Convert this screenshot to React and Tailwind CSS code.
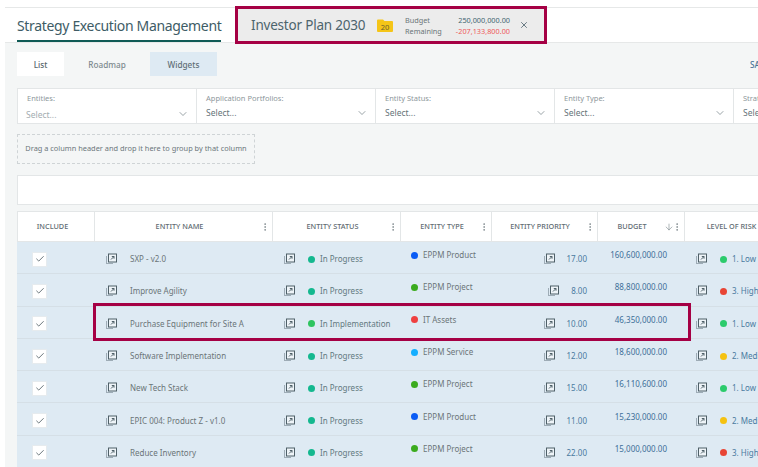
import { ChevronDown, X, ArrowDown, Check, EllipsisVertical } from "lucide-react";

const filters = [
  { label: "Entities:", faded: true },
  { label: "Application Portfolios:" },
  { label: "Entity Status:" },
  { label: "Entity Type:" },
  { label: "Strategic Theme:" },
];

const columns = [
  { label: "Include", width: "w-[77px] pr-[7px]" },
  { label: "Entity Name", width: "w-[178px] pr-[8px]", menu: true },
  { label: "Entity Status", width: "w-[128px] pr-[8px]", menu: true },
  { label: "Entity Type", width: "w-[91px] pr-[8px]", menu: true },
  { label: "Entity Priority", width: "w-[106px] pr-[9px]", menu: true },
  { label: "Budget", width: "w-[87px] pr-[18px]", menu: true, sort: true },
  { label: "Level of Risk", width: "w-[120px] pr-[26px]" },
];

const rows = [
  { name: "SXP - v2.0", status: "In Progress", statusDot: "bg-[#14b88f]", type: "EPPM Product", typeDot: "bg-[#0a5cf5]", priority: "17.00", budget: "160,600,000.00", risk: "1. Low", riskDot: "bg-[#2ccb6c]" },
  { name: "Improve Agility", status: "In Progress", statusDot: "bg-[#14b88f]", type: "EPPM Project", typeDot: "bg-[#3bab1e]", priority: "8.00", budget: "88,800,000.00", risk: "3. High", riskDot: "bg-[#e84535]" },
  { name: "Purchase Equipment for Site A", status: "In Implementation", statusDot: "bg-[#2ec45f]", type: "IT Assets", typeDot: "bg-[#ef4040]", priority: "10.00", budget: "46,350,000.00", risk: "1. Low", riskDot: "bg-[#2ccb6c]" },
  { name: "Software Implementation", status: "In Progress", statusDot: "bg-[#14b88f]", type: "EPPM Service", typeDot: "bg-[#14aeff]", priority: "12.00", budget: "18,600,000.00", risk: "2. Medium", riskDot: "bg-[#f5c211]" },
  { name: "New Tech Stack", status: "In Progress", statusDot: "bg-[#14b88f]", type: "EPPM Project", typeDot: "bg-[#3bab1e]", priority: "15.00", budget: "16,110,600.00", risk: "1. Low", riskDot: "bg-[#2ccb6c]" },
  { name: "EPIC 004: Product Z - v1.0", status: "In Progress", statusDot: "bg-[#14b88f]", type: "EPPM Product", typeDot: "bg-[#0a5cf5]", priority: "11.00", budget: "15,230,000.00", risk: "2. Medium", riskDot: "bg-[#f5c211]" },
  { name: "Reduce Inventory", status: "In Progress", statusDot: "bg-[#14b88f]", type: "EPPM Project", typeDot: "bg-[#3bab1e]", priority: "22.00", budget: "15,000,000.00", risk: "3. High", riskDot: "bg-[#e84535]" },
];

function OpenIcon() {
  return (
    <svg width="11" height="12" viewBox="0 0 11 12" fill="none" className="shrink-0">
      <path d="M0.5 3.5V10.5H7.5" stroke="#5f6f78" strokeWidth="1" strokeDasharray="1 1" />
      <rect x="2.5" y="1" width="8" height="8" fill="#eef4f8" stroke="#4f6068" strokeWidth="1" />
      <path d="M5 6.5L8 3.5M5.8 3.5H8V5.7" stroke="#4f6068" strokeWidth="1" />
    </svg>
  );
}

function Dot({ color }) {
  return <span className={`w-[7px] h-[7px] rounded-full shrink-0 ${color}`} />;
}

export default function App() {
  return (
    <div className="w-[758px] h-[467px] overflow-hidden bg-white pt-[7px] pl-[5px] font-['Noto_Sans',sans-serif]">
      <div className="h-full bg-[#f4f6f6] flex flex-col">
        {/* Title bar */}
        <div className="h-[36px] shrink-0 bg-white border-y border-[#e6e8e8] flex pl-[12px]">
          <div className="h-[34px] w-[204px] shrink-0 border-b-[2px] border-[#0f5a55] text-[14px] tracking-[-0.34px] leading-[36px] text-[#3e5c66] whitespace-nowrap">
            Strategy Execution Management
          </div>
          <div className="ml-[14px] -mt-[2px] h-[38px] w-[312px] shrink-0 border-[3px] border-[#a50044] bg-[#ececec] flex items-center pl-[13px]">
            <span className="text-[13.5px] tracking-[-0.2px] text-[#4d646c] whitespace-nowrap w-[126px]">Investor Plan 2030</span>
            <svg width="16" height="13" viewBox="0 0 16 13" className="shrink-0">
              <path d="M0 1.5A1 1 0 0 1 1 .5H6L7.5 2H15A1 1 0 0 1 16 3V12A1 1 0 0 1 15 13H1A1 1 0 0 1 0 12Z" fill="#f5c518" />
              <text x="8" y="11" textAnchor="middle" fontSize="7.5" fill="#6b6130">20</text>
            </svg>
            <div className="ml-[12px] w-[105px] pt-[1px] text-[7.3px] leading-[11px] text-[#6b7578]">
              <div className="flex justify-between">
                <span>Budget</span>
                <span className="text-[#3f6470]">250,000,000.00</span>
              </div>
              <div className="flex justify-between">
                <span>Remaining</span>
                <span className="text-[#ee5a5a]">-207,133,800.00</span>
              </div>
            </div>
            <X size={10} strokeWidth={1.8} className="ml-[9px] text-[#3e5560]" />
          </div>
        </div>

        {/* View tabs */}
        <div className="h-[24px] shrink-0 mt-[9px] pl-[12px] flex text-[8.2px] leading-[26px] font-medium text-center">
          <div className="w-[47px] bg-white text-[#58666c]">List</div>
          <div className="w-[86px] text-[#7d8a8f]">Roadmap</div>
          <div className="w-[67px] bg-[#deeaf3] text-[#5f6e75]">Widgets</div>
          <div className="ml-auto text-[#4b7596] w-[8px] overflow-hidden text-left">SAVE</div>
        </div>

        {/* Filters */}
        <div className="h-[36px] shrink-0 mt-[12px] ml-[12px] flex bg-white border-y border-[#e3e6e7] border-l">
          {filters.map((f) => (
            <div key={f.label} className="w-[179px] shrink-0 border-r border-[#e3e6e7] pl-[9px] pr-[7px]">
              <div className="text-[7.5px] leading-[11px] mt-[4px] text-[#8d979b] whitespace-nowrap">{f.label}</div>
              <div className="flex items-center justify-between mt-[3px]">
                <span className={f.faded ? "text-[8.5px] mt-[2px] -ml-[1px] text-[#a3adb1]" : "text-[8.5px] text-[#667379]"}>Select...</span>
                <ChevronDown size={12} strokeWidth={1.2} className="text-[#55646b]" />
              </div>
            </div>
          ))}
        </div>

        {/* Group panel */}
        <div className="h-[30px] w-[238px] shrink-0 mt-[10px] ml-[12px] border border-dashed border-[#cfd4d6] flex items-center justify-center text-[7.4px] text-[#6c777c] whitespace-nowrap">
          Drag a column header and drop it here to group by that column
        </div>

        {/* Toolbar strip */}
        <div className="h-[30px] shrink-0 mt-[11px] ml-[12px] bg-white border border-r-0 border-[#e3e6e7]" />

        {/* Table */}
        <div className="mt-[6px] ml-[12px] relative">
          <div className="h-[31px] flex bg-white border-y border-[#e3e6e7] border-l">
            {columns.map((c) => (
              <div key={c.label} className={`${c.width} shrink-0 border-r border-[#e3e6e7] flex items-center justify-center relative text-[7.3px] font-medium uppercase text-[#5f6c72] whitespace-nowrap`}>
                {c.label}
                {c.sort && <ArrowDown size={10} strokeWidth={1.2} className="absolute right-[10px] text-[#5f6c72]" />}
                {c.menu && <EllipsisVertical size={10} strokeWidth={1.6} className="absolute right-[2.5px] text-[#6b777c]" />}
              </div>
            ))}
          </div>

          {rows.map((r) => (
            <div key={r.name} className="h-[32.3px] pt-[3px] flex items-center bg-[#deeaf3] border-b border-[#d5dfe6] text-[8px] text-[#6b7578] whitespace-nowrap">
              <div className="w-[77px] shrink-0 pl-[15px]">
                <span className="w-[15px] h-[15px] bg-white border border-[#e6ebee] flex items-center justify-center">
                  <Check size={10} strokeWidth={2} className="text-[#4d5c63]" />
                </span>
              </div>
              <div className="w-[178px] shrink-0 flex items-center pl-[12px] gap-[13px]">
                <OpenIcon />
                <span>{r.name}</span>
              </div>
              <div className="w-[128px] shrink-0 flex items-center pl-[12px]">
                <OpenIcon />
                <span className="ml-[13px] mr-[5px] flex"><Dot color={r.statusDot} /></span>
                <span className="text-[#62797f]">{r.status}</span>
              </div>
              <div className="w-[91px] shrink-0 flex items-center gap-[5px] pl-[11px] pb-[8px]">
                <Dot color={r.typeDot} />
                <span>{r.type}</span>
              </div>
              <div className="w-[106px] shrink-0 flex items-center justify-end gap-[12px] pr-[10px] text-[#4a7aa0]">
                <OpenIcon />
                <span>{r.priority}</span>
              </div>
              <div className="w-[87px] shrink-0 text-right pr-[17px] pb-[8px] text-[#3d6f99]">{r.budget}</div>
              <div className="flex items-center pl-[12px]">
                <OpenIcon />
                <span className="ml-[13px] mr-[5px] flex"><Dot color={r.riskDot} /></span>
                <span className="text-[#4a7aa0]">{r.risk}</span>
              </div>
            </div>
          ))}

          {/* Highlighted row outline */}
          <div className="absolute left-[76px] top-[92px] w-[598px] h-[38px] border-[3px] border-[#a50044] pointer-events-none" />
        </div>
      </div>
    </div>
  );
}
